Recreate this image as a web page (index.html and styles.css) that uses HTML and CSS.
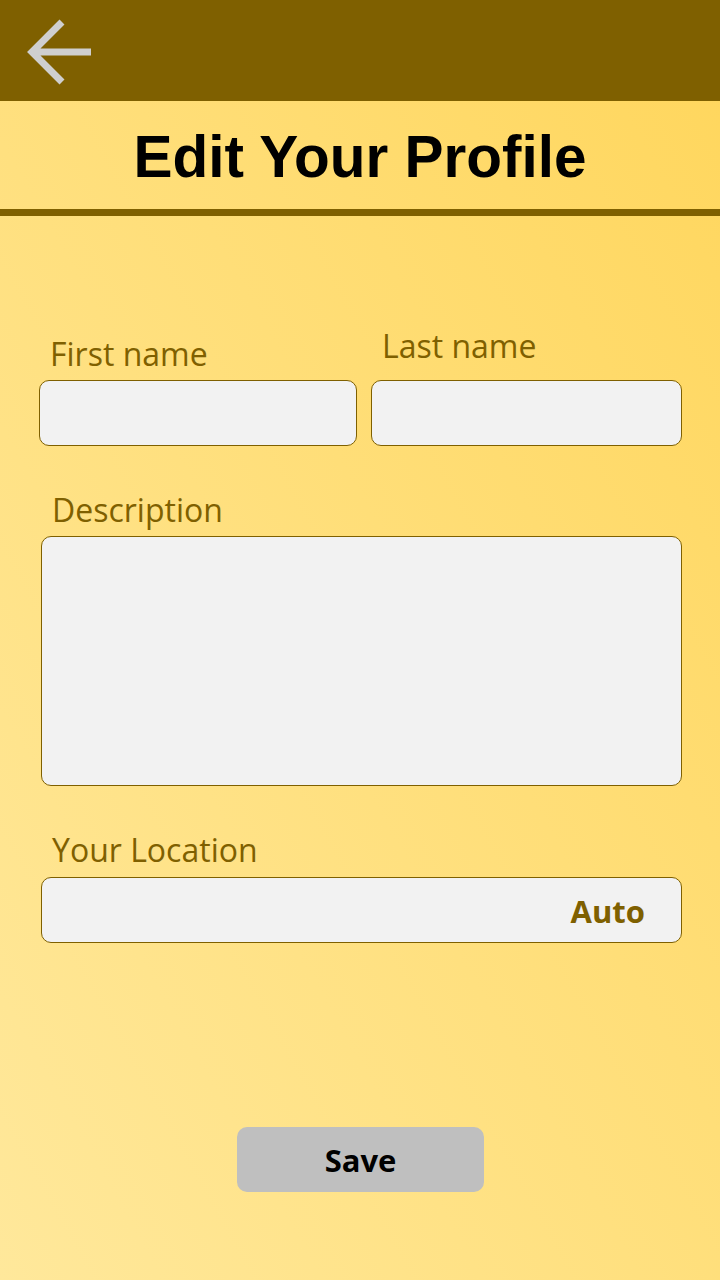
FILE: index.html
```html
<!DOCTYPE html>
<html lang="en">
<head>
<meta charset="utf-8">
<title>Edit Your Profile</title>
<link rel="stylesheet" href="styles.css">
</head>
<body>
<header class="topbar">
  <svg class="back" width="100" height="100" viewBox="0 0 100 100" aria-label="Back">
    <path d="M62 22 L32 52 L62 82 M32 52 H91" fill="none" stroke="#cfcfcf" stroke-width="7" stroke-linecap="butt" stroke-linejoin="miter"/>
  </svg>
</header>
<div class="titlebar">
  <h1 class="title">Edit Your Profile</h1>
</div>
<main class="form">
  <div class="names">
    <div class="field">
      <label class="label">First name</label>
      <div class="input"></div>
    </div>
    <div class="field">
      <label class="label label-last">Last name</label>
      <div class="input"></div>
    </div>
  </div>
  <div class="field field-spaced">
    <label class="label">Description</label>
    <div class="input textarea"></div>
  </div>
  <div class="field field-spaced">
    <label class="label label-loc">Your Location</label>
    <div class="input location"><span class="auto">Auto</span></div>
  </div>
  <button class="save">Save</button>
</main>
</body>
</html>
```
FILE: styles.css
```css
html, body {
  margin: 0;
  padding: 0;
}
body {
  width: 720px;
  height: 1280px;
  overflow: hidden;
  background: linear-gradient(to top right, #ffe89b, #ffd65c);
  font-family: "Open Sans", "Noto Sans", sans-serif;
}
.topbar {
  height: 101px;
  background: #7f6000;
  display: flex;
  align-items: flex-start;
}
.back {
  display: block;
}
.titlebar {
  height: 115px;
  box-sizing: border-box;
  padding-top: 3px;
  border-bottom: 7px solid #7f6000;
  display: flex;
  align-items: center;
  justify-content: center;
}
.title {
  margin: 0;
  font-family: "Liberation Sans", Arial, sans-serif;
  font-weight: 700;
  font-size: 58.5px;
  color: #000;
}
.form {
  display: flex;
  flex-direction: column;
  padding: 118px 38px 0 41px;
}
.names {
  display: grid;
  grid-template-columns: 318px 311px;
  column-gap: 14px;
  margin-left: -2px;
}
.field {
  display: flex;
  flex-direction: column;
}
.field-spaced {
  margin-top: 44px;
}
.label {
  display: block;
  font-size: 32px;
  line-height: 40px;
  color: #7f6000;
  padding-left: 11px;
  margin-bottom: 6px;
}
.label-last {
  margin-top: -8px;
  margin-bottom: 14px;
}
.label-loc {
  margin-bottom: 7px;
}
.input {
  height: 66px;
  box-sizing: border-box;
  background: #f2f2f2;
  border: 1px solid #7f6000;
  border-radius: 10px;
}
.textarea {
  height: 250px;
}
.location {
  display: flex;
  align-items: center;
  justify-content: flex-end;
  padding-right: 36px;
  padding-top: 2px;
}
.auto {
  font-weight: 700;
  font-size: 31px;
  color: #7f6000;
}
.save {
  align-self: center;
  margin: 184px 0 0 -2px;
  width: 247px;
  height: 65px;
  border: none;
  border-radius: 10px;
  background: #bfbfbf;
  font-family: "Open Sans", "Noto Sans", sans-serif;
  font-weight: 700;
  font-size: 31px;
  color: #000;
  padding: 0;
}
```
